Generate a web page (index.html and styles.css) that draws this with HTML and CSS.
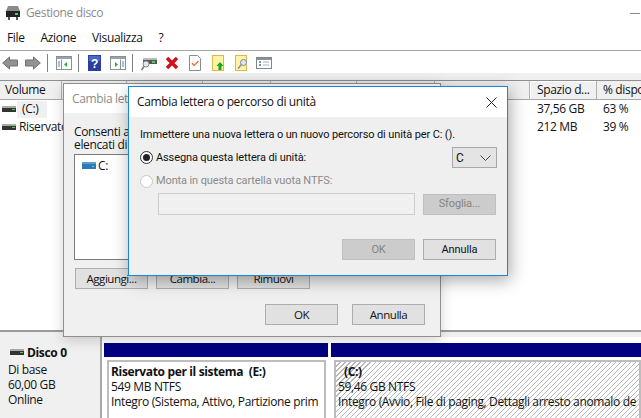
FILE: index.html
```html
<!DOCTYPE html>
<html lang="it">
<head>
<meta charset="utf-8">
<title>Gestione disco</title>
<link rel="stylesheet" href="styles.css">
</head>
<body>
<div class="app">
  <header class="titlebar">
    <svg class="app-icon" width="16" height="16" viewBox="0 0 16 16"><path d="M3 1h10l2 5H1z" fill="#8b8b8b"/><rect x="1" y="6" width="14" height="6" fill="#222"/><rect x="10" y="8" width="3" height="2" fill="#4fd04f"/><rect x="3" y="12" width="2" height="3" fill="#555"/><rect x="11" y="12" width="2" height="3" fill="#555"/></svg>
    <span class="title-text">Gestione disco</span>
    <span class="minimize"></span>
  </header>
  <nav class="menubar">
    <span>File</span><span>Azione</span><span>Visualizza</span><span>?</span>
  </nav>
  <div class="toolbar">
    <svg class="tb-icon" width="16" height="14" viewBox="0 0 16 14"><path d="M.7 7l6.800-6v3h8v6h-8v3z" fill="#929292" stroke="#707070"/></svg>
    <svg class="tb-icon g7" width="16" height="14" viewBox="0 0 16 14"><path d="M15.300 7L8.500 1v3h-8v6h8v3z" fill="#929292" stroke="#707070"/></svg>
    <i class="tb-sep"></i>
    <svg class="tb-icon g8" width="16" height="14" viewBox="0 0 16 14"><rect x=".5" y=".5" width="15" height="13" fill="#fff" stroke="#8a9098"/><rect x="1" y="1" width="14" height="2" fill="#9aa2aa"/><path d="M5.500 3.500v10" stroke="#8a9098"/><path d="M2 6h2M2 8h2M2 10h2" stroke="#4a7fc0"/><path d="M11 6v5L8 8.500z" fill="#22b03a"/></svg>
    <i class="tb-sep"></i>
    <svg class="tb-icon g9" width="13" height="16" viewBox="0 0 13 16"><rect width="13" height="16" fill="#2a3f9e"/><rect x="1" y="1" width="11" height="5" fill="#4a66c8"/><text x="6.500" y="13" class="help-q">?</text></svg>
    <svg class="tb-icon g9" width="16" height="14" viewBox="0 0 16 14"><rect x=".5" y=".5" width="15" height="13" fill="#fff" stroke="#8a9098"/><rect x="1" y="1" width="14" height="2" fill="#9aa2aa"/><path d="M10.500 3.500v10" stroke="#8a9098"/><path d="M12 6h2M12 8h2M12 10h2" stroke="#4a7fc0"/><path d="M5 6v5l3-2.500z" fill="#22b03a"/></svg>
    <i class="tb-sep"></i>
    <svg class="tb-icon g8" width="16" height="15" viewBox="0 0 16 15"><rect x="2" y="2" width="14" height="6" fill="#555"/><rect x="2" y="2" width="14" height="2" fill="#bbb"/><rect x="11" y="5" width="3" height="2" fill="#4fd04f"/><circle cx="5" cy="8" r="3" fill="#dfe9f2" stroke="#8a8a8a"/><path d="M3 10.500L0.500 14" stroke="#777" stroke-width="1.500"/></svg>
    <svg class="tb-icon g8" width="14" height="14" viewBox="0 0 14 14"><path d="M2 2l10 10M12 2L2 12" stroke="#d0101c" stroke-width="3.400"/></svg>
    <svg class="tb-icon g10" width="12" height="16" viewBox="0 0 12 16"><path d="M.5.500h8l3 3v12H.500z" fill="#fff" stroke="#8a8a8a"/><path d="M3 8l2 2.500L9.500 6" fill="none" stroke="#e8703a" stroke-width="1.300"/></svg>
    <svg class="tb-icon g11" width="12" height="16" viewBox="0 0 12 16"><rect x=".5" y=".5" width="11" height="15" fill="#fff3a8" stroke="#e0b84a"/><path d="M8 7l3.500 4H9.500v4h-3v-4H4.500z" fill="#18a818"/></svg>
    <svg class="tb-icon g11" width="13" height="16" viewBox="0 0 13 16"><rect x=".5" y=".5" width="11" height="15" fill="#fff3a8" stroke="#e0b84a"/><circle cx="8.500" cy="7.500" r="3" fill="#dbe8f2" stroke="#7c8a94"/><path d="M6.500 9.500L3 13.500" stroke="#8a8a8a" stroke-width="1.500"/></svg>
    <svg class="tb-icon g8" width="16" height="12" viewBox="0 0 16 12"><rect x=".5" y=".5" width="15" height="11" fill="#fff" stroke="#80868c"/><rect x="1" y="1" width="14" height="2" fill="#8c9298"/><path d="M3 5h2M3 8h2" stroke="#3a78c8" stroke-width="1.500"/><path d="M7 5h6M7 8h6" stroke="#aab0b6"/></svg>
  </div>
  <div class="strip"></div>

  <section class="volumes">
    <div class="col-head">
      <span class="col c-name">Volume</span><span class="col"></span><span class="col"></span><span class="col"></span><span class="col"></span><span class="col"></span><span class="col"></span><span class="col c-free-head">Spazio d...</span><span class="col c-pct-head">% dispo</span>
    </div>
    <div class="vol-row">
      <svg class="vol-icon" width="14" height="7" viewBox="0 0 14 7"><rect width="14" height="2" fill="#aaa"/><rect y="2" width="14" height="4" fill="#333"/><rect x="10" y="3" width="3" height="1" fill="#4fd04f"/></svg>
      <span class="c-name-cell selected">(C:)</span><span class="c-free">37,56 GB</span><span class="c-pct">63 %</span>
    </div>
    <div class="vol-row">
      <svg class="vol-icon" width="14" height="7" viewBox="0 0 14 7"><rect width="14" height="2" fill="#aaa"/><rect y="2" width="14" height="4" fill="#333"/><rect x="10" y="3" width="3" height="1" fill="#4fd04f"/></svg>
      <span class="c-name-cell">Riservato</span><span class="c-free">212 MB</span><span class="c-pct">39 %</span>
    </div>
  </section>

  <div class="splitter"></div>

  <section class="disks">
    <div class="disk-label">
      <div class="disk-name">
        <svg width="14" height="7" viewBox="0 0 14 7"><rect width="14" height="2" fill="#aaa"/><rect y="2" width="14" height="4" fill="#333"/><rect x="10" y="3" width="3" height="1" fill="#4fd04f"/></svg>
        <b>Disco 0</b>
      </div>
      <div>Di base</div>
      <div>60,00 GB</div>
      <div>Online</div>
    </div>
    <div class="partition part-e">
      <div class="part-bar"></div>
      <div class="part-body">
        <b>Riservato per il sistema&nbsp; (E:)</b>
        <div>549 MB NTFS</div>
        <div>Integro (Sistema, Attivo, Partizione prim</div>
      </div>
    </div>
    <div class="partition part-c">
      <div class="part-bar"></div>
      <div class="part-body hatch">
        <b class="c-title">(C:)</b>
        <div>59,46 GB NTFS</div>
        <div>Integro (Avvio, File di paging, Dettagli arresto anomalo de</div>
      </div>
    </div>
  </section>
</div>

<div class="dialog dialog-back">
  <div class="dlg-title inactive">Cambia let</div>
  <div class="back-body">
    <p class="back-text">Consenti ac<br>elencati di s</p>
    <div class="listbox">
      <svg width="14" height="8" viewBox="0 0 14 8"><rect width="14" height="2" fill="#5a9bd5"/><rect y="2" width="14" height="5" fill="#2e78b8"/><rect x="10" y="4" width="2" height="1" fill="#5fe0a0"/></svg>
      <span>C:</span>
    </div>
    <div class="btn-row">
      <button class="btn">Aggiungi...</button><button class="btn">Cambia...</button><button class="btn">Rimuovi</button>
    </div>
    <div class="btn-row end">
      <button class="btn">OK</button><button class="btn">Annulla</button>
    </div>
  </div>
</div>

<div class="dialog dialog-front">
  <div class="dlg-title">
    <span>Cambia lettera o percorso di unità</span>
    <svg class="close" width="11" height="11" viewBox="0 0 11 11"><path d="M.5.500l10 10M10.500.500l-10 10" stroke="#222" fill="none"/></svg>
  </div>
  <div class="front-body">
    <p class="front-text">Immettere una nuova lettera o un nuovo percorso di unità per C: ().</p>
    <div class="opt-row">
      <label class="radio-label"><span class="radio on"></span>Assegna questa lettera di unità:</label>
      <div class="select"><span>C</span><svg width="11" height="6" viewBox="0 0 11 6"><path d="M.5.500l5 5 5-5" fill="none" stroke="#444"/></svg></div>
    </div>
    <label class="radio-label muted"><span class="radio"></span>Monta in questa cartella vuota NTFS:</label>
    <div class="path-row">
      <div class="path-input"></div>
      <button class="btn disabled">Sfoglia...</button>
    </div>
    <div class="btn-row end front-actions">
      <button class="btn disabled">OK</button><button class="btn">Annulla</button>
    </div>
  </div>
</div>
</body>
</html>
```
FILE: styles.css
```css
* { box-sizing: border-box; }
html, body { margin: 0; height: 100%; }
body {
  position: relative;
  width: 641px;
  height: 418px;
  overflow: hidden;
  background: #fff;
  font: 12px/16px "Open Sans", "Noto Sans", sans-serif;
  letter-spacing: -0.35px;
  color: #111;
}
.app { display: flex; flex-direction: column; height: 418px; }
.titlebar { display: flex; align-items: center; height: 25px; padding: 1px 0 0 5px; flex: none; }
.title-text { margin-left: 5px; color: #8c8c8c; }
.minimize { width: 10px; height: 1px; background: #888; margin-left: auto; margin-right: 1px; }
.menubar { display: flex; gap: 16px; height: 26px; padding: 5px 0 0 7px; border-bottom: 1px solid #a5a5a5; flex: none; }
.toolbar { display: flex; align-items: center; height: 22px; padding: 2px 0 0 2px; flex: none; background: #fff; }
.tb-icon { flex: none; }
.g7 { margin-left: 7px; }
.g8 { margin-left: 8px; }
.g9 { margin-left: 9px; }
.g10 { margin-left: 10px; }
.g11 { margin-left: 11px; }
.tb-sep { width: 1px; height: 18px; background: #808080; margin-left: 6px; }
.help-q { font: bold 12px "Liberation Sans", sans-serif; fill: #fff; text-anchor: middle; }
.strip { height: 8px; background: #f0f0f0; border-bottom: 1px solid #8f8f8f; flex: none; }

.volumes { flex: 1; min-height: 0; background: #fff; }
.col-head { display: grid; grid-template-columns: 62px 65px 76px 68px 86px 78px 95px 67px 44px; height: 19px; background: #f0f0f0; }
.col { border-right: 1px solid #b0b0b0; border-bottom: 1px solid #a8a8a8; padding: 1px 0 0 5px; white-space: nowrap; overflow: hidden; }
.c-pct-head { border-right: 0; padding-left: 6px; }
.c-free-head { padding-left: 7px; box-shadow: inset 1px 1px 0 #fff; }
.vol-row { position: relative; display: flex; align-items: center; height: 18px; }
.vol-icon { margin-left: 2px; flex: none; }
.c-name-cell { padding: 0 3px; white-space: nowrap; }
.c-name-cell.selected { width: 30px; height: 17px; margin-left: 1px; padding-left: 5px; background: #f0f0f0; }
.c-free { position: absolute; left: 537px; }
.c-pct { position: absolute; left: 603px; }
.splitter { height: 7px; flex: none; background: #f0f0f0; border-top: 2px solid #9a9a9a; }

.disks { display: flex; height: 81px; flex: none; background: #f0f0f0; overflow: hidden; }
.disk-label { width: 102px; flex: none; padding: 8px 0 0 8px; line-height: 15px; border-right: 2px solid #a8a8a8; }
.disk-name { display: flex; align-items: center; gap: 3px; margin: 0 0 2px 2px; }
.partition { display: flex; flex-direction: column; background: #fff; padding-top: 6px; }
.part-e { width: 228px; padding-left: 2px; padding-right: 2px; }
.part-c { flex: 1; padding-left: 1px; min-width: 0; }
.part-bar { height: 14px; background: #000080; flex: none; }
.part-body { flex: 1; margin: 3px 2px 0 3px; padding: 2px 0 0 2px; border: 2px solid #bdbdbd; border-bottom: 0; line-height: 15px; white-space: nowrap; overflow: hidden; background: #fff; }
.hatch { margin: 3px 0 0 3px; padding-left: 2px; background: repeating-linear-gradient(135deg, #fff 0 2.8px, #b8b8b8 2.8px 3.54px); }
.c-title { margin-left: 6px; }

.dialog { position: absolute; background: #f0f0f0; }
.dialog-back { left: 63px; top: 83px; width: 378px; height: 254px; border: 1px solid #8f8f8f; box-shadow: 0 3px 12px rgba(0,0,0,.18); }
.dialog-front { left: 128px; top: 86px; width: 380px; height: 190px; border: 1px solid #1c86d6; box-shadow: 2px 4px 16px rgba(0,0,0,.35); background: #efefef; }
.dlg-title { display: flex; align-items: center; justify-content: space-between; height: 30px; padding: 0 10px 0 8px; background: #fff; white-space: nowrap; }
.dlg-title.inactive { height: 29px; color: #8c8c8c; }
.back-body { padding: 12px 10px 0; }
.back-text { margin: 0; line-height: 13px; white-space: nowrap; }
.listbox { display: flex; align-items: flex-start; gap: 2px; width: 340px; height: 106px; margin-top: 3px; padding: 3px 7px; background: #fff; border: 1px solid #7a7a7a; }
.listbox svg { margin-top: 4px; }
.btn-row { display: flex; gap: 8px; margin-top: 8px; margin-left: 1px; }
.btn-row.end { justify-content: flex-end; gap: 14px; margin: 15px 5px 0 0; }
.btn { width: 73px; height: 21px; padding: 0; background: #e1e1e1; border: 1px solid #adadad; font: inherit; letter-spacing: inherit; color: #111; }
.back-body .btn { font-size: 11.5px; letter-spacing: -0.45px; }
.btn.disabled { background: #cccccc; border-color: #bfbfbf; color: #838383; }
.front-body { padding: 10px 10px 0 11px; font-family: Roboto, "Open Sans", sans-serif; font-size: 11px; letter-spacing: -0.12px; }
.front-text { margin: 0; white-space: nowrap; }
.opt-row { display: flex; align-items: center; justify-content: space-between; margin-top: 4px; }
.radio-label { display: flex; align-items: center; gap: 3px; height: 20px; }
.radio-label.muted { color: #8a8a8a; margin-top: 3px; }
.radio { position: relative; width: 13px; height: 13px; border: 1px solid #c6c6c6; border-radius: 50%; background: #fff; }
.radio.on { border-color: #333; }
.radio.on::after { content: ""; position: absolute; left: 2px; top: 2px; width: 7px; height: 7px; border-radius: 50%; background: #222; }
.select { display: flex; align-items: center; justify-content: space-between; width: 45px; height: 21px; padding: 0 5px 0 3px; background: #e4e4e4; border: 1px solid #a8a8a8; font-size: 12px; }
.path-row { display: flex; align-items: center; justify-content: space-between; margin: 2px 1px 0 18px; }
.path-input { width: 257px; height: 22px; background: #f0f0f0; border: 1px solid #cdcdcd; }
.btn-row.end.front-actions { margin: 24px 1px 0 0; gap: 8px; }
.front-body .btn { flex: none; }
```
